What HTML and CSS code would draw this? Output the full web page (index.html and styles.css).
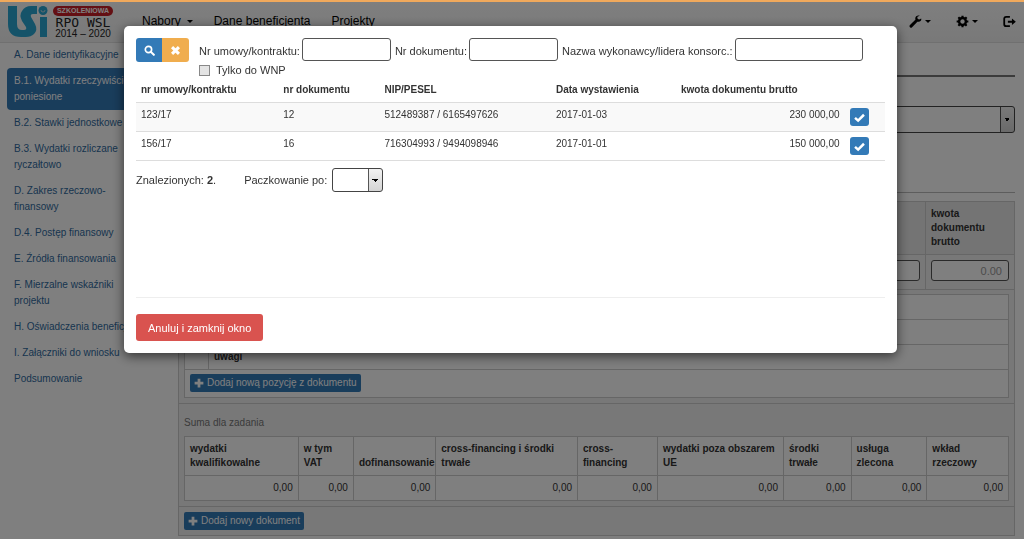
FILE: index.html
```html
<!DOCTYPE html>
<html lang="pl">
<head>
<meta charset="utf-8">
<title>LSI RPO WSL 2014 – 2020</title>
<link rel="stylesheet" href="styles.css">
</head>
<body>
<svg class="defs" width="0" height="0" aria-hidden="true">
  <symbol id="search" viewBox="0 0 16 16"><circle cx="6.5" cy="6.5" r="4.6" fill="none" stroke="currentColor" stroke-width="2.4"/><path d="M10 10l4.300 4.300" stroke="currentColor" stroke-width="3" stroke-linecap="round"/></symbol>
  <symbol id="times" viewBox="0 0 16 16"><path d="M3 3l10 10M13 3L3 13" stroke="currentColor" stroke-width="4.400"/></symbol>
  <symbol id="check" viewBox="0 0 16 16"><path d="M1.500 8.500l4.500 4L14.500 4" fill="none" stroke="currentColor" stroke-width="3.600"/></symbol>
  <symbol id="plus" viewBox="0 0 16 16"><path d="M8 1v14M1 8h14" stroke="currentColor" stroke-width="4.400"/></symbol>
  <symbol id="wrench" viewBox="0 0 16 16"><path d="M2.500 13.700L10 6.200" stroke="currentColor" stroke-width="3.600" stroke-linecap="round"/><path d="M15 4.200l-3 1.500-1.800-1.300.2-2.200L13.200.8C10 -.2 7.200 2 7.800 5.200l3 3c3 .6 5-1.400 4.200-4z" fill="currentColor"/></symbol>
  <symbol id="gear" viewBox="0 0 16 16"><circle cx="8" cy="8" r="4.200" fill="none" stroke="currentColor" stroke-width="3"/><path d="M8 .8v3M8 12.200v3M.8 8h3M12.200 8h3M2.900 2.900L5 5M11 11l2.100 2.100M2.900 13.100L5 11M11 5l2.100-2.100" stroke="currentColor" stroke-width="2.600"/></symbol>
  <symbol id="logout" viewBox="0 0 16 16"><path d="M8.500 2.200H4A2.500 2.500 0 0 0 1.500 4.700v6.600A2.500 2.500 0 0 0 4 13.800h4.500" fill="none" stroke="currentColor" stroke-width="2.200"/><path d="M6 7H11V4.200l4.800 4L11 12.200V9.400H6z" fill="currentColor"/></symbol>
</svg>

<header class="topbar">
  <a class="logo" href="#" aria-label="LSI szkoleniowa RPO WSL 2014 – 2020">
    <svg class="logo-mark" viewBox="0 0 40 32" aria-hidden="true">
      <path d="M0 0H9V18Q9 24 14 24H16Q19 24 18 21L14 15Q11 9 14 5Q17 0 23 0H29V8H25Q22 8 23 11L27 18Q30 24 26 28Q23 31 18 31H13Q0 31 0 18z" fill="#2ba6d3"/>
      <circle cx="35" cy="4.500" r="4.500" fill="#2ba6d3"/><path d="M33 4a2 2 0 0 0 4 0" fill="none" stroke="#ddd" stroke-width=".8"/><path d="M32 11h7v20h-7z" fill="#2ba6d3"/>
    </svg>
    <span class="logo-text"><span class="logo-tag">SZKOLENIOWA</span><span class="logo-rpo">RPO WSL</span><span class="logo-years">2014 – 2020</span></span>
  </a>
  <nav class="menu">
    <a href="#">Nabory <i class="caret"></i></a>
    <a href="#">Dane beneficjenta</a>
    <a href="#">Projekty</a>
  </nav>
  <nav class="tools">
    <a href="#" aria-label="Narzędzia"><svg class="tool-icon"><use href="#wrench"/></svg><i class="caret"></i></a>
    <a href="#" aria-label="Ustawienia"><svg class="tool-icon"><use href="#gear"/></svg><i class="caret"></i></a>
    <a href="#" aria-label="Wyloguj"><svg class="tool-icon"><use href="#logout"/></svg></a>
  </nav>
</header>

<div class="page">
  <nav class="sidebar">
    <a href="#">A. Dane identyfikacyjne</a>
    <a href="#" class="active">B.1. Wydatki rzeczywiście poniesione</a>
    <a href="#">B.2. Stawki jednostkowe</a>
    <a href="#">B.3. Wydatki rozliczane ryczałtowo</a>
    <a href="#">D. Zakres rzeczowo-finansowy</a>
    <a href="#">D.4. Postęp finansowy</a>
    <a href="#">E. Źródła finansowania</a>
    <a href="#">F. Mierzalne wskaźniki projektu</a>
    <a href="#" class="nowrap">H. Oświadczenia beneficjenta</a>
    <a href="#">I. Załączniki do wniosku</a>
    <a href="#">Podsumowanie</a>
  </nav>
  <main class="content">
    <div class="heading"></div>
    <div class="picker"><select class="select wide" aria-label="Zadanie"><option></option></select></div>
    <section class="panel">
      <div class="doc-row doc-head"><div></div><div>kwota dokumentu brutto</div></div>
      <div class="doc-row doc-fields"><div><input class="field" type="text" aria-label="Dokument"></div><div><input class="field amount" type="text" placeholder="0.00" aria-label="kwota dokumentu brutto"></div></div>
      <div class="items">
        <div class="item"></div>
        <div class="item"></div>
        <div class="item remarks"><span></span><b>uwagi</b></div>
        <div class="item-actions"><button class="btn small" type="button"><svg class="icon"><use href="#plus"/></svg> Dodaj nową pozycję z dokumentu</button></div>
      </div>
      <div class="summary">
        <p class="summary-title">Suma dla zadania</p>
        <table class="sums">
          <colgroup><col class="s1"><col class="s2"><col class="s3"><col class="s4"><col class="s5"><col class="s6"><col class="s7"><col class="s8"><col class="s9"></colgroup>
          <thead><tr><th>wydatki kwalifikowalne</th><th>w tym VAT</th><th>dofinansowanie</th><th>cross-financing i środki trwałe</th><th>cross-financing</th><th>wydatki poza obszarem UE</th><th>środki trwałe</th><th>usługa zlecona</th><th>wkład rzeczowy</th></tr></thead>
          <tbody><tr><td>0,00</td><td>0,00</td><td>0,00</td><td>0,00</td><td>0,00</td><td>0,00</td><td>0,00</td><td>0,00</td><td>0,00</td></tr></tbody>
        </table>
      </div>
      <div class="panel-foot"><button class="btn small" type="button"><svg class="icon"><use href="#plus"/></svg> Dodaj nowy dokument</button></div>
    </section>
  </main>
</div>

<div class="backdrop"></div>
<div class="progress"></div>
<div class="modal" role="dialog" aria-label="Wybór dokumentu">
  <form class="filters">
    <div class="btn-group">
      <button class="btn" type="button" aria-label="Szukaj"><svg class="icon"><use href="#search"/></svg></button><button class="btn warning" type="button" aria-label="Wyczyść"><svg class="icon"><use href="#times"/></svg></button>
    </div>
    <div class="filter-fields">
      <div class="filter-line">
        <label for="f1">Nr umowy/kontraktu:</label><input class="field" id="f1" type="text">
        <label for="f2">Nr dokumentu:</label><input class="field" id="f2" type="text">
        <label for="f3">Nazwa wykonawcy/lidera konsorc.:</label><input class="field long" id="f3" type="text">
      </div>
      <div class="check-line"><input type="checkbox" class="tick" id="wnp"><label for="wnp">Tylko do WNP</label></div>
    </div>
  </form>
  <table class="results">
    <colgroup><col class="r1"><col class="r2"><col class="r3"><col class="r4"><col class="r5"><col class="r6"></colgroup>
    <thead><tr><th>nr umowy/kontraktu</th><th>nr dokumentu</th><th>NIP/PESEL</th><th>Data wystawienia</th><th>kwota dokumentu brutto</th><th></th></tr></thead>
    <tbody>
      <tr><td>123/17</td><td>12</td><td>512489387 / 6165497626</td><td>2017-01-03</td><td class="num">230 000,00</td><td><button class="btn pick" type="button" aria-label="Wybierz"><svg class="icon"><use href="#check"/></svg></button></td></tr>
      <tr><td>156/17</td><td>16</td><td>716304993 / 9494098946</td><td>2017-01-01</td><td class="num">150 000,00</td><td><button class="btn pick" type="button" aria-label="Wybierz"><svg class="icon"><use href="#check"/></svg></button></td></tr>
    </tbody>
  </table>
  <div class="paging"><span>Znalezionych: <b>2</b>.</span><label for="per">Paczkowanie po:</label><select class="select" id="per"><option></option></select></div>
  <div class="modal-foot"><button class="btn danger" type="button">Anuluj i zamknij okno</button></div>
</div>
</body>
</html>
```
FILE: styles.css
```css
* { box-sizing: border-box; }
body { margin: 0; font: 11px/16px "Liberation Sans", Arial, sans-serif; color: #333; background: #fff; overflow: hidden; }
a { text-decoration: none; color: #2f6a9e; }
button, input, select { font: inherit; }
.defs { display: none; }

.topbar { display: flex; height: 43px; padding-left: 8px; border-bottom: 1px solid #e0e0e0; background: linear-gradient(#fff, #f2f2f2); }
.logo { display: flex; gap: 5px; padding-top: 6px; width: 134px; }
.logo-mark { width: 40px; height: 32px; }
.logo-text { display: flex; flex-direction: column; width: 60px; text-align: center; color: #222; }
.logo-tag { border-radius: 5px; background: #c81f26; color: #fff; font-weight: bold; font-size: 7px; line-height: 10px; }
.logo-rpo { font: 13px/13px "DejaVu Sans Mono", monospace; }
.logo-years { line-height: 9px; white-space: nowrap; font-size: 10px; }
.menu, .tools { display: flex; align-items: center; font-size: 12px; }
.menu { gap: 21px; }
.menu a, .tools a { display: flex; align-items: center; color: #000; white-space: nowrap; }
.menu a { gap: 6px; }
.caret { border: 3px solid transparent; border-top-color: #000; border-bottom: 0; }
.tools { margin-left: auto; padding-right: 8px; gap: 25px; }
.tools a { gap: 3px; }
.tool-icon { width: 13px; height: 13px; }

.page { display: grid; grid-template-columns: 178px 1fr; }
.sidebar { display: flex; flex-direction: column; padding: 1px 32px 0 7px; font-size: 10px; }
.sidebar a { padding: 5px 7px; border-radius: 4px; }
.sidebar a:first-child { padding-top: 3px; }
.sidebar .active { background: #337ab7; color: #fff; }
.sidebar .nowrap { white-space: nowrap; }
.content { padding-right: 9px; }
.heading { height: 34px; border-bottom: 2px solid #777; }
.picker { height: 116px; padding-top: 29px; border-bottom: 1px solid #bbb; }
.field { height: 23px; border: 1px solid #555; border-radius: 3px; background: #fff; padding: 0 6px; }
.select {
  appearance: none; height: 24px; border: 1px solid #444; border-radius: 3px;
  background:
    linear-gradient(45deg, transparent 50%, #000 50%) right 7px center / 3px 3px no-repeat,
    linear-gradient(135deg, #000 50%, transparent 50%) right 4px center / 3px 3px no-repeat,
    linear-gradient(#555, #555) right 13px top / 1px 100% no-repeat,
    linear-gradient(#f2f2f2, #d4d4d4) right top / 13px 100% no-repeat, #fff;
}
.select.wide { width: 100%; height: 27px; }

.panel { margin-top: 8px; border: 1px solid #ccc; background: #f0f0f0; font-size: 10px; line-height: 14px; }
.doc-row { display: grid; grid-template-columns: 1fr 88px; border-bottom: 1px solid #ccc; }
.doc-row > div { padding: 5px; border-right: 1px solid #ccc; }
.doc-row > div:last-child { border-right: 0; }
.doc-head { font-weight: bold; background: #e8e8e8; }
.doc-fields > div { padding-bottom: 8px; }
.doc-row .field { display: block; width: 100%; height: 21px; }
.amount { text-align: right; font-size: 11px; }
.amount::placeholder { color: #999; }
.items { margin: 4px 5px 5px; border: 1px solid #ccc; background: #fff; }
.item { height: 25px; border-bottom: 1px solid #ccc; }
.remarks { display: grid; grid-template-columns: 24px 1fr; }
.remarks span { border-right: 1px solid #ccc; }
.remarks b { padding: 5px; }
.item-actions { padding: 4px 5px 5px; }
.btn { display: flex; align-items: center; justify-content: center; gap: 3px; border: 0; border-radius: 3px; padding: 0; background: #337ab7; color: #fff; }
.icon { width: 11px; height: 11px; }
.btn.small { height: 18px; padding: 0 4px; border-radius: 2px; }
.btn.small .icon { width: 10px; height: 10px; }
.summary { border-top: 1px solid #ccc; border-bottom: 1px solid #ccc; padding: 12px 5px 5px; }
.summary-title { margin: 0 0 6px; color: #777; }
.sums { width: 100%; table-layout: fixed; border-collapse: collapse; background: #fff; }
.sums th, .sums td { padding: 5px; border: 1px solid #ccc; text-align: left; vertical-align: bottom; }
.sums td { text-align: right; }
.sums th:nth-child(8) { padding-right: 12px; }
.s1 { width: 13.8%; } .s2 { width: 6.7%; } .s3 { width: 10%; } .s4 { width: 17.2%; } .s5 { width: 9.7%; }
.s6 { width: 15.3%; } .s7 { width: 8.2%; } .s8 { width: 9.2%; } .s9 { width: 9.9%; }
.panel-foot { padding: 5px; }

.backdrop { position: fixed; inset: 0; background: rgba(0, 0, 0, 0.5); }
.progress { position: fixed; inset: 0 0 auto; height: 2px; background: #f0a95c; }
.modal { position: fixed; top: 26px; left: 124px; right: 127px; padding: 12px; border-radius: 5px; background: #fff; box-shadow: 0 3px 12px rgba(0, 0, 0, 0.6); }
.filters { display: flex; gap: 10px; }
.btn-group { display: flex; }
.btn-group .btn { width: 26px; height: 24px; border-radius: 3px 0 0 3px; }
.btn-group .btn.warning { width: 27px; border-radius: 0 3px 3px 0; background: #f0ad4e; }
.filter-line { display: flex; align-items: flex-end; white-space: nowrap; }
.filter-line label { line-height: 19px; }
.filter-line .field { width: 89px; margin: 0 4px 0 2px; }
.filter-line .field.long { width: 128px; }
.check-line { display: flex; align-items: center; gap: 6px; padding-top: 1px; }
.tick { appearance: none; width: 11px; height: 11px; margin: 0; border: 1px solid #888; background: #e4e4e4; }
.results { width: 100%; table-layout: fixed; border-collapse: collapse; font-size: 10px; line-height: 14px; }
.results th, .results td { padding: 5px; text-align: left; vertical-align: top; border-bottom: 1px solid #ddd; }
.results tbody tr:nth-child(odd) { background: #f9f9f9; }
.results .num { text-align: right; }
.r1 { width: 19%; } .r2 { width: 13.5%; } .r3 { width: 22.9%; } .r4 { width: 16.7%; } .r5 { width: 22.5%; } .r6 { width: 5.4%; }
.pick { width: 19px; height: 18px; }
.paging { display: flex; align-items: center; padding-top: 7px; }
.paging label { margin: 0 5px 0 28px; }
.paging .select { width: 51px; }
.modal-foot { margin-top: 105px; padding-top: 16px; border-top: 1px solid #eee; }
.danger { height: 27px; padding: 0 12px; background: #d9534f; }
```
